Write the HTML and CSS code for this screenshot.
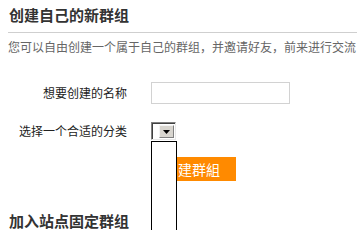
FILE: index.html
```html
<!DOCTYPE html>
<html lang="zh-CN">
<head>
<meta charset="utf-8">
<link rel="stylesheet" href="styles.css">
</head>
<body>
<div class="page">
  <div class="head">
    <h2 class="title">创建自己的新群组</h2>
  </div>
  <p class="desc">您可以自由创建一个属于自己的群组，并邀请好友，前来进行交流</p>
  <div class="form">
    <div class="row row-name">
      <label class="label">想要创建的名称</label>
      <div class="input"></div>
    </div>
    <div class="row row-cat">
      <label class="label">选择一个合适的分类</label>
      <div class="select">
        <div class="sel-field"></div>
        <div class="sel-btn">
          <svg width="7" height="4" viewBox="0 0 7 4"><path d="M0 0H7L3.5 4Z" fill="#000"/></svg>
        </div>
        <div class="dropdown"></div>
      </div>
    </div>
    <div class="row-btn">
      <div class="btn">创建群組</div>
    </div>
  </div>
  <h2 class="title title2">加入站点固定群组</h2>
</div>
</body>
</html>
```
FILE: styles.css
```css
html, body {
  margin: 0;
  padding: 0;
  background: #fff;
  overflow: hidden;
}
body {
  font-family: "Noto Sans CJK SC", "Noto Sans", sans-serif;
  color: #222;
}
.page {
  padding-left: 8px;
  height: 230px;
}
.head {
  border-bottom: 1px solid #cfcfcf;
}
.title {
  margin: 0;
  font-size: 15px;
  line-height: 15px;
  font-weight: bold;
  color: #333;
  padding: 7px 0 10px 1px;
}
.desc {
  margin: 8px 0 0 0;
  font-size: 12px;
  line-height: 12px;
  color: #666;
  white-space: nowrap;
}
.form {
  font-size: 12px;
}
.row {
  display: flex;
  align-items: center;
  gap: 24px;
}
.label {
  width: 119px;
  text-align: right;
  line-height: 12px;
  color: #222;
}
.row-name {
  margin-top: 29px;
}
.input {
  width: 139px;
  height: 22px;
  box-sizing: border-box;
  border: 1px solid #d2d2d2;
  background: #fff;
}
.row-cat {
  margin-top: 18px;
}
.select {
  position: relative;
  display: flex;
  width: 25px;
  height: 18px;
  box-sizing: border-box;
  border-top: 1px solid #808080;
  border-left: 1px solid #808080;
  border-right: 1px solid #e8e8e8;
  border-bottom: 1px solid #e8e8e8;
  box-shadow: inset 1px 1px 0 #404040;
  background: #fff;
  padding: 2px 1px 1px 2px;
}
.sel-field {
  flex: 1;
}
.sel-btn {
  width: 15px;
  box-sizing: border-box;
  background: #d8d5cf;
  border-top: 1px solid #f4f4f4;
  border-left: 1px solid #f4f4f4;
  border-right: 1px solid #808080;
  border-bottom: 1px solid #808080;
  display: flex;
  align-items: center;
  justify-content: center;
}
.sel-btn svg {
  display: block;
}
.dropdown {
  position: absolute;
  left: -1px;
  top: 18px;
  width: 26px;
  height: 100px;
  box-sizing: border-box;
  border: 1px solid #000;
  background: #fff;
  z-index: 2;
}
.row-btn {
  margin-top: 17px;
  padding-left: 143px;
}
.btn {
  display: inline-block;
  background: #ff8a00;
  color: #fff;
  font-size: 14px;
  line-height: 24px;
  height: 24px;
  padding: 0 16px 0 13px;
}
.title2 {
  padding: 0 0 0 1px;
  margin-top: 32px;
}
```
